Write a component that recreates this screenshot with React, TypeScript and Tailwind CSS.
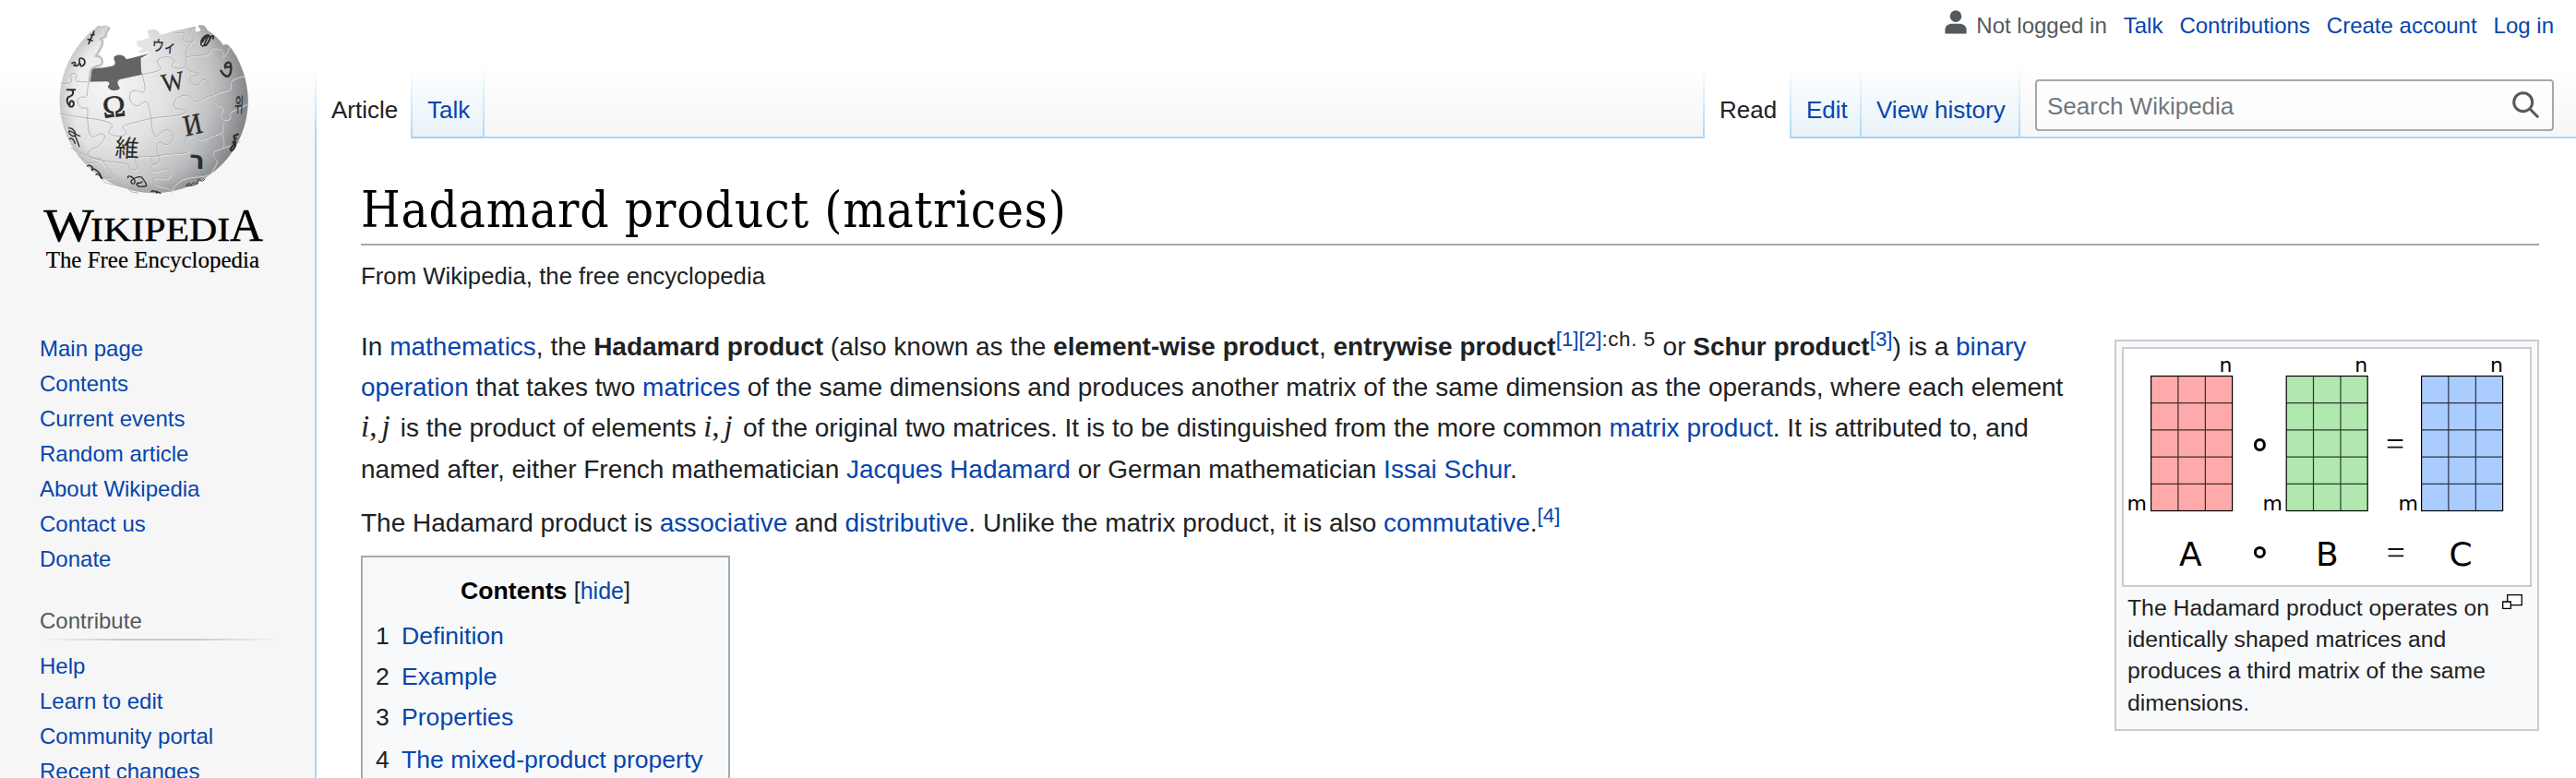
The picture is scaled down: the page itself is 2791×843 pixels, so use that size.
import React from "react";

const mainLinks = ["Main page", "Contents", "Current events", "Random article", "About Wikipedia", "Contact us", "Donate"];
const contributeLinks = ["Help", "Learn to edit", "Community portal", "Recent changes"];
const tocItems = ["Definition", "Example", "Properties", "The mixed-product property"];

function A({ children, className = "" }: { children: React.ReactNode; className?: string }) {
  return (
    <a href="#" className={`text-[#0645ad] ${className}`}>
      {children}
    </a>
  );
}

function Sup({ children }: { children: React.ReactNode }) {
  return <span className="align-[10px] text-[22.4px] leading-[0]">{children}</span>;
}

function Pair() {
  return (
    <span className="inline-block w-[35px] font-['Liberation_Serif',serif] text-[33px] leading-[0] whitespace-nowrap">
      <i>i</i>,<i className="ml-[5px]">j</i>
    </span>
  );
}

function Fade() {
  return <div className="w-[2px] shrink-0 bg-linear-to-b from-white to-[#a7d7f9]" />;
}

function Tab({ label, active = false, className }: { label: string; active?: boolean; className: string }) {
  return (
    <div
      className={`shrink-0 pl-[16px] pt-[31px] text-[26px] leading-[32px] whitespace-nowrap ${
        active ? "bg-white text-[#202122]" : "border-b-2 border-[#a0d0f4] bg-linear-to-b from-white to-[#e8f2f8] text-[#0645ad]"
      } ${className}`}
    >
      {label}
    </div>
  );
}

const seams = [
  "M78 210C95 212 108 212 112 206C116 196 104 188 113 180C122 174 132 182 127 192C122 204 130 208 172 206",
  "M342 182C372 176 400 172 402 163C404 154 388 150 392 138C398 122 440 120 446 136C450 146 434 150 440 158C450 164 475 163 482 158C490 148 478 134 486 127C500 118 550 124 562 112C566 102 560 96 580 96C604 98 608 108 604 118C598 130 612 128 626 90",
  "M450 48C466 44 484 44 478 58C470 74 490 84 508 74C522 62 492 58 500 42C504 34 508 32 514 30",
  "M486 127C480 104 496 84 508 74",
  "M342 182C346 200 356 226 348 238C338 248 326 226 308 238C292 252 306 284 326 284C338 284 344 266 356 272C368 282 366 304 372 325C372 350 376 374 384 382C396 390 402 362 424 362C450 366 448 404 424 410C412 412 404 398 396 404C388 412 388 434 396 446C404 460 396 472 388 474C372 474 368 482 376 494C396 506 414 480 428 492C440 508 430 524 412 522C392 514 372 520 380 536C400 552 440 546 438 566",
  "M74 310C96 314 120 318 164 324C200 328 240 336 244 346C248 358 228 362 236 374C246 384 284 386 290 376C294 362 274 358 280 350C298 342 340 332 372 325C410 318 470 318 482 306C490 294 472 300 450 292C438 282 448 258 474 250C500 246 500 262 512 270C528 274 552 252 570 250C592 240 604 236 620 234C640 228 620 206 638 198C650 190 664 190 676 186",
  "M482 160C500 176 520 176 528 180C528 190 508 182 500 192C494 208 510 220 524 216C536 210 530 198 546 200C560 206 562 230 568 250C572 268 580 278 592 284C604 290 612 288 600 304C592 320 606 334 622 328C636 318 616 306 640 298C660 294 672 280 682 278",
  "M110 420C140 440 180 454 214 462C260 470 296 468 300 480C298 492 316 496 326 488C334 478 314 466 322 456C350 440 380 456 396 446C430 438 480 442 492 434C502 422 480 420 480 404C484 382 508 378 520 386C530 400 544 394 560 386C580 378 594 372 600 370C612 360 596 350 608 338",
  "M172 206C160 226 168 250 158 256C146 256 136 252 132 268C134 290 152 296 162 290C168 296 164 312 164 324C168 350 166 376 178 384C196 386 208 366 220 380C222 398 208 402 204 412C190 426 164 420 166 444C180 462 204 450 214 462C226 480 244 500 248 514C250 526 234 516 218 520C200 534 250 540 298 552C304 566 304 562 330 568",
  "M600 370C604 390 612 410 602 420C584 430 574 424 572 440C576 460 588 452 584 470C570 490 570 500 560 506C540 516 500 510 470 524C452 536 440 548 438 560",
  "M602 420C620 412 652 412 660 398",
  "M372 452C374 468 380 470 388 474",
  "M150 452C150 476 170 470 196 470C212 476 214 490 222 502",
];

function Logo() {
  return (
    <svg viewBox="0 0 750 840" className="h-[280px] w-[250px] overflow-visible" fill="none">
      <defs>
        <radialGradient id="ball" cx="225" cy="215" r="475" gradientUnits="userSpaceOnUse">
          <stop offset="0" stopColor="#f6f6f6" />
          <stop offset="0.42" stopColor="#e2e2e3" />
          <stop offset="0.72" stopColor="#c2c3c5" />
          <stop offset="1" stopColor="#88898c" />
        </radialGradient>
        <radialGradient id="rim" cx="372" cy="270" r="312" gradientUnits="userSpaceOnUse">
          <stop offset="0.82" stopColor="#777" stopOpacity="0" />
          <stop offset="1" stopColor="#777" stopOpacity="0.35" />
        </radialGradient>
        <path
          id="shell"
          d="M190 32C196 22 204 22 210 26C216 20 236 22 236 32C232 42 224 48 226 56C222 64 204 58 202 64C214 64 218 72 213 82C208 96 200 104 190 120C204 118 216 130 214 146C206 162 184 156 177 164C172 174 178 190 172 206C210 206 240 206 270 198L342 182C338 164 338 140 342 128C352 124 364 126 369 116C366 104 350 110 340 114C326 112 330 104 342 100C344 92 328 96 326 88L322 74L364 64C366 54 352 42 366 37C380 34 398 38 398 50C412 56 424 46 450 40L514 26C522 28 508 40 520 44C532 42 538 38 524 26C524 18 542 20 548 28L556 40C580 54 600 76 606 88C614 80 620 84 628 92A306 300 0 1 1 132 92C150 68 168 46 190 32Z"
        />
      </defs>
      <path d="M178 163C206 162 232 158 248 154C264 144 244 134 252 124C262 114 284 118 288 128C288 136 300 130 318 126L368 113L338 128C338 150 338 170 343 184L268 202C262 214 272 222 266 230C254 238 232 234 232 222C240 212 232 206 222 206H172Z" fill="#646464" />
      <use href="#shell" fill="url(#ball)" />
      <use href="#shell" fill="url(#rim)" />
      <path d="M226 205C236 206 240 211 230 221C234 236 264 238 270 226C262 214 258 206 270 198Z" fill="#646464" />
      <path d="M236 28C232 42 220 48 224 58C220 66 204 62 206 68C222 70 210 96 192 122C214 122 218 148 206 152C188 158 176 158 174 174L170 204" stroke="#bdbec0" strokeWidth="7" />
      <g stroke="#fafafa" strokeWidth="3" transform="translate(1.5 2.5)" opacity="0.7">
        {seams.map((d) => <path key={d} d={d} />)}
      </g>
      <g stroke="#a3a4a6" strokeWidth="2.4">
        {seams.map((d) => <path key={d} d={d} />)}
      </g>
      <g fill="#2c2c2c" textAnchor="middle" fontFamily="Liberation Serif, Noto Sans CJK JP, serif">
        <text fontSize="100" transform="translate(254 319) rotate(-6)" stroke="#2c2c2c" strokeWidth="2">Ω</text>
        <text fontSize="84" transform="translate(446 233) rotate(-10) scale(0.92 1)" stroke="#2c2c2c" strokeWidth="1">W</text>
        <text fontSize="96" transform="translate(513 376) rotate(-12) scale(0.86 1)" stroke="#2c2c2c" strokeWidth="1.5">И</text>
        <text fontSize="78" transform="translate(292 450) rotate(3)" fontFamily="Noto Sans CJK JP, sans-serif">維</text>
        <text fontSize="48" transform="translate(412 108) rotate(5) scale(0.82 1)" stroke="#2c2c2c" strokeWidth="1" fontFamily="Noto Sans CJK JP, sans-serif">ウィ</text>
        <text fontSize="66" transform="translate(656 305) rotate(3) scale(0.46 1)" stroke="#2c2c2c" strokeWidth="1" fontFamily="Noto Sans CJK KR, sans-serif">위</text>
        <text fontSize="82" transform="translate(520 488) rotate(2)" fontFamily="DejaVu Sans, sans-serif" fontWeight="700">ר</text>
      </g>
      <g stroke="#2c2c2c" strokeWidth="5" strokeLinecap="round" strokeLinejoin="round">
        <path d="M186 42L168 82M166 68L180 72M176 54L186 52" />
        <path d="M114 146C122 140 126 142 124 150M120 152C136 160 140 142 138 136C136 126 152 126 156 140C156 156 138 160 142 148" />
        <path d="M98 232H124M112 232C122 240 118 250 106 254C94 258 96 276 108 286C120 292 124 272 114 268C106 266 106 282 106 286" strokeWidth="6" />
        <path d="M104 356C118 356 128 372 124 380C116 388 102 374 104 366C110 362 124 380 140 382M124 380L138 416M106 392C112 384 122 396 124 406" strokeWidth="4" />
        <path d="M164 480C172 472 186 486 180 494C174 490 184 484 194 494C208 504 206 514 212 520M192 508C198 502 204 510 210 520" strokeWidth="4" />
        <path d="M296 518C292 508 312 512 318 526C322 542 304 540 306 528C312 520 330 512 340 516C348 526 356 534 356 544C342 548 326 548 324 538C328 530 340 540 342 530" strokeWidth="4" />
        <path d="M372 562C380 558 388 562 390 568M388 562L402 568" strokeWidth="4" />
        <path d="M486 544C484 536 500 534 500 542C506 534 514 530 518 538C526 538 520 522 526 522C532 526 534 534 546 522M486 544C500 546 512 542 524 536" strokeWidth="3" />
        <path d="M646 378C638 388 640 396 648 390M644 398C630 402 642 410 646 404C638 416 626 418 630 428C634 434 644 420 646 410M640 382L654 376" strokeWidth="6" />
        <path d="M534 86C530 66 552 48 560 56C566 66 556 88 538 90M544 84L556 58M550 88L566 60C570 54 578 56 572 66M538 76L552 56" strokeWidth="5" />
        <path d="M612 160C610 142 628 138 630 150C634 170 628 190 616 188C606 186 602 174 598 170M616 158H630" strokeWidth="7" />
      </g>
      <g fill="#000" stroke="#000" strokeWidth="1.2" fontFamily="Liberation Serif, serif">
        <text x="22" y="722" fontSize="152" textLength="164" lengthAdjust="spacingAndGlyphs">W</text>
        <text x="174" y="722" fontSize="109" textLength="454" lengthAdjust="spacingAndGlyphs">IKIPEDI</text>
        <text x="627" y="722" fontSize="152" textLength="108" lengthAdjust="spacingAndGlyphs">A</text>
        <text x="29" y="809" fontSize="76" textLength="694" lengthAdjust="spacingAndGlyphs" strokeWidth="0.6">The Free Encyclopedia</text>
      </g>
    </svg>
  );
}

function Matrix({ x, fill }: { x: number; fill: string }) {
  return (
    <g stroke="#000">
      <rect x={x} y="29.5" width="88" height="146" fill={fill} strokeWidth="1.2" />
      <path
        d={`M${x + 29.3} 29.5v146M${x + 58.8} 29.5v146M${x} 58.7h88M${x} 87.9h88M${x} 117.1h88M${x} 146.3h88`}
        strokeWidth="1.2"
        strokeOpacity="0.75"
      />
    </g>
  );
}

function Figure() {
  return (
    <svg viewBox="0 0 440 256" className="block h-[256px] w-[440px]" fill="none">
      <Matrix x={29.6} fill="#ffaaaa" />
      <Matrix x={176.2} fill="#b0e8b0" />
      <Matrix x={322.6} fill="#aaccff" />
      <g fill="#000" fontFamily="DejaVu Sans, sans-serif" fontSize="22">
        <text x="103.6" y="24.7">n</text>
        <text x="250.2" y="24.7">n</text>
        <text x="397" y="24.7">n</text>
        <text x="3.6" y="175">m</text>
        <text x="150.6" y="175">m</text>
        <text x="297.4" y="175">m</text>
      </g>
      <g fill="#000" fontFamily="DejaVu Sans, sans-serif" fontSize="36">
        <text x="60" y="235">A</text>
        <text x="208" y="235">B</text>
        <text x="352.6" y="235">C</text>
      </g>
      <ellipse cx="147.4" cy="104" rx="5" ry="5.5" stroke="#000" strokeWidth="3" />
      <ellipse cx="147.4" cy="220.4" rx="5" ry="5" stroke="#000" strokeWidth="3" />
      <path d="M285.8 99h16.6M285.8 106.7h16.6M286.6 217h16.6M286.6 224.4h16.6" stroke="#111" strokeWidth="1.8" />
    </svg>
  );
}

export default function App() {
  return (
    <div className="flex h-[843px] w-[2791px] overflow-hidden bg-[#f6f6f6] bg-[linear-gradient(to_bottom,#fff_70px,#f6f6f6_150px)] font-['Liberation_Sans',Arial,sans-serif] text-[#202122]">
      <aside className="w-[341px] shrink-0">
        <div className="h-[359px] pt-[20px] pl-[40px]">
          <Logo />
        </div>
        <nav className="pl-[43px] text-[24px] leading-[38px] text-[#0645ad]">
          {mainLinks.map((t) => (
            <div key={t}><A>{t}</A></div>
          ))}
        </nav>
        <h3 className="mt-[29px] ml-[43px] h-[38px] text-[24px] leading-[38px] text-[#54595d]">Contribute</h3>
        <div className="ml-[43px] h-[2px] w-[262px] bg-[linear-gradient(to_right,rgba(200,204,209,0)_0%,#c8ccd1_33%,#c8ccd1_66%,rgba(200,204,209,0)_100%)]" />
        <nav className="mt-[9px] pl-[43px] text-[24px] leading-[38px] text-[#0645ad]">
          {contributeLinks.map((t) => (
            <div key={t}><A>{t}</A></div>
          ))}
        </nav>
      </aside>

      <div className="flex min-w-0 flex-1 flex-col">
        <header className="h-[150px] shrink-0">
          <div className="flex h-[72px] items-start justify-end gap-[18px] pr-[24px] text-[24px] leading-[56px] whitespace-nowrap">
            <div className="flex text-[#54595d]">
              <svg viewBox="0 0 24 26" className="mt-[11px] mr-[10px] h-[26px] w-[24px]" fill="#54595d">
                <circle cx="12" cy="6.6" r="6.3" />
                <path d="M.4 25.6v-4.4C.4 17 4 14.7 8 14.7h8c4 0 7.6 2.3 7.6 6.5v4.4Z" />
              </svg>
              Not logged in
            </div>
            <A>Talk</A>
            <A>Contributions</A>
            <A>Create account</A>
            <A>Log in</A>
          </div>
          <div className="flex h-[78px]">
            <Fade />
            <Tab label="Article" active className="w-[102px]" />
            <Fade />
            <Tab label="Talk" className="w-[76px]" />
            <Fade />
            <div className="flex-1 border-b-2 border-[#a7d7f9]" />
            <Fade />
            <Tab label="Read" active className="w-[92px]" />
            <Fade />
            <Tab label="Edit" className="w-[74px]" />
            <Fade />
            <Tab label="View history" className="w-[170px]" />
            <Fade />
            <div className="w-[602px] shrink-0 border-b-2 border-[#a7d7f9] pt-[14px] pl-[16px]">
              <div className="flex h-[56px] w-[562px] items-start justify-between rounded-[4px] border-2 border-[#a2a9b1] bg-white/60 pl-[11px] text-[26px] leading-[54px] text-[#72777d]">
                <span>Search Wikipedia</span>
                <svg viewBox="0 0 30 30" className="mt-[10px] mr-[14px] h-[30px] w-[30px]" fill="none" stroke="#54595d" strokeWidth="3">
                  <circle cx="12.7" cy="12.7" r="10" />
                  <path d="M19.5 19.5L29.2 29.2" />
                </svg>
              </div>
            </div>
          </div>
        </header>

        <main className="flex-1 border-l-2 border-[#a7d7f9] bg-white pl-[48px]">
          <h1 className="w-[2360px] border-b-2 border-[#a2a9b1] pt-[41px] pb-[1px] font-['DejaVu_Serif_Condensed','DejaVu_Serif',serif] text-[54.5px] leading-[72px] tracking-[0.8px] text-black">
            Hadamard product (matrices)
          </h1>
          <p className="mt-[18px] text-[25.76px] leading-[30px]">From Wikipedia, the free encyclopedia</p>
          <div className="flex">
            <article className="w-[1900px] shrink-0 text-[28px] leading-[44.2px] whitespace-nowrap">
              <p className="mt-[40px]">
                In <A>mathematics</A>, the <b>Hadamard product</b> (also known as the <b>element-wise product</b>, <b>entrywise product</b>
                <Sup><A>[1][2]</A><span className="tracking-[0.6px]">:ch. 5</span></Sup> or <b>Schur product</b>
                <Sup><A>[3]</A></Sup>) is a <A>binary</A>
                <br />
                <A>operation</A> that takes two <A>matrices</A> of the same dimensions and produces another matrix of the same dimension as the operands, where each element
                <br />
                <Pair /> is the product of elements <Pair /> of the original two matrices. It is to be distinguished from the more common <A>matrix product</A>. It is attributed to, and
                <br />
                named after, either French mathematician <A>Jacques Hadamard</A> or German mathematician <A>Issai Schur</A>.
              </p>
              <p className="mt-[14px]">
                The Hadamard product is <A>associative</A> and <A>distributive</A>. Unlike the matrix product, it is also <A>commutative</A>.<Sup><A>[4]</A></Sup>
              </p>
              <section className="mt-[13.2px] h-[300px] w-[400px] border-2 border-[#a2a9b1] bg-[#f8f9fa] pl-[14px] text-[26.6px]">
                <div className="pt-[15px] pr-[14px] text-center leading-[42px]">
                  <b className="text-black">Contents</b> <span className="text-[25px]">[<A>hide</A>]</span>
                </div>
                <ol className="mt-[6px]">
                  {tocItems.map((t, i) => (
                    <li key={t} className={`flex leading-[44px] ${i === 3 ? "pt-[2px]" : ""}`}>
                      <span className="w-[28px]">{i + 1}</span>
                      <A>{t}</A>
                    </li>
                  ))}
                </ol>
              </section>
            </article>
            <figure className="mt-[54px] h-[424px] w-[460px] shrink-0 border-2 border-[#c8ccd1] bg-[#f8f9fa] p-[6px]">
              <div className="h-[260px] w-[444px] border-2 border-[#c8ccd1] bg-white">
                <Figure />
              </div>
              <figcaption className="flex justify-between pt-[6px] pl-[6px] text-[24.75px] leading-[34.2px] whitespace-nowrap">
                <span>
                  The Hadamard product operates on
                  <br />
                  identically shaped matrices and
                  <br />
                  produces a third matrix of the same
                  <br />
                  dimensions.
                </span>
                <svg viewBox="0 0 22 16" className="mt-[2px] mr-[10px] h-[16px] w-[22px] shrink-0" fill="#fff" stroke="#000" strokeWidth="1.3">
                  <path d="M5.7 .7h15.6v11H5.7Z" />
                  <path d="M.7 8h8.6v7.3H.7Z" />
                </svg>
              </figcaption>
            </figure>
          </div>
        </main>
      </div>
    </div>
  );
}
